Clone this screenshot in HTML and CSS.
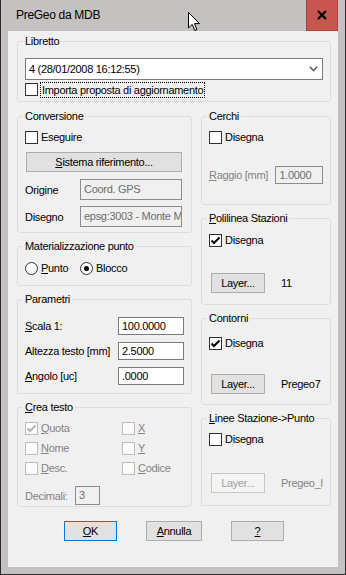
FILE: index.html
```html
<!DOCTYPE html>
<html lang="it">
<head>
    <meta charset="UTF-8">
    <title>PreGeo da MDB</title>
    <link rel="stylesheet" href="styles.css">
</head>
<body>
<div class="window">
    <div class="titlebar">
        <span class="title">PreGeo da MDB</span>
        <span class="close">
            <svg width="12" height="12" viewBox="0 0 12 12"><path d="M2 2 L10 10 M10 2 L2 10" stroke="#000" stroke-width="2.2" fill="none"/></svg>
        </span>
    </div>

    <div class="client">
        <fieldset class="group libretto">
            <legend>Libretto</legend>
            <div class="combo">
                <span>4 (28/01/2008 16:12:55)</span>
                <svg class="chevron" width="9" height="6" viewBox="0 0 9 6"><path d="M0.8 0.8 L4.5 4.6 L8.2 0.8" stroke="#606060" stroke-width="1.6" fill="none"/></svg>
            </div>
            <div class="check focus-row">
                <span class="box"></span>
                <span class="focus">Importa proposta di aggiornamento</span>
            </div>
        </fieldset>

        <div class="columns">
            <div class="col left">
                <fieldset class="group conversione">
                    <legend>Conversione</legend>
                    <div class="check"><span class="box"></span><span class="lbl">Eseguire</span></div>
                    <div class="btn wide"><u>S</u>istema riferimento...</div>
                    <div class="field-row">
                        <span class="field-label">Origine</span>
                        <span class="textbox disabled tall">Coord. GPS</span>
                    </div>
                    <div class="field-row second">
                        <span class="field-label">Disegno</span>
                        <span class="textbox disabled tall">epsg:3003 - Monte Mario / Italy zone 1</span>
                    </div>
                </fieldset>

                <fieldset class="group materializzazione">
                    <legend>Materializzazione punto</legend>
                    <div class="radios">
                        <div class="radio-item"><span class="radio"></span><span class="lbl"><u>P</u>unto</span></div>
                        <div class="radio-item"><span class="radio on"></span><span class="lbl">Blocco</span></div>
                    </div>
                </fieldset>

                <fieldset class="group parametri">
                    <legend>Parametri</legend>
                    <div class="param-grid">
                        <span><u>S</u>cala 1:</span>
                        <span class="textbox">100.0000</span>
                        <span>Altezza testo [mm]</span>
                        <span class="textbox">2.5000</span>
                        <span><u>A</u>ngolo [uc]</span>
                        <span class="textbox">.0000</span>
                    </div>
                </fieldset>

                <fieldset class="group crea">
                    <legend><u>C</u>rea testo</legend>
                    <div class="crea-grid">
                        <div class="check off"><span class="box"><svg width="11" height="11" viewBox="0 0 11 11"><path d="M1.5 5.5 L4 8 L9.5 2.5" stroke="#b4b4b4" stroke-width="2" fill="none"/></svg></span><span class="lbl"><u>Q</u>uota</span></div>
                        <div class="check off"><span class="box"></span><span class="lbl"><u>X</u></span></div>
                        <div class="check off"><span class="box"></span><span class="lbl"><u>N</u>ome</span></div>
                        <div class="check off"><span class="box"></span><span class="lbl"><u>Y</u></span></div>
                        <div class="check off"><span class="box"></span><span class="lbl"><u>D</u>esc.</span></div>
                        <div class="check off"><span class="box"></span><span class="lbl"><u>C</u>odice</span></div>
                    </div>
                    <div class="decimali">
                        <span class="muted">Decimali:</span>
                        <span class="textbox disabled small">3</span>
                    </div>
                </fieldset>
            </div>

            <div class="col right">
                <fieldset class="group cerchi">
                    <legend>Cerchi</legend>
                    <div class="check"><span class="box"></span><span class="lbl">Disegna</span></div>
                    <div class="raggio">
                        <span class="muted"><u>R</u>aggio [mm]</span>
                        <span class="textbox disabled">1.0000</span>
                    </div>
                </fieldset>

                <fieldset class="group polilinea">
                    <legend><u>P</u>olilinea Stazioni</legend>
                    <div class="check"><span class="box"><svg width="11" height="11" viewBox="0 0 11 11"><path d="M1.5 5.5 L4 8 L9.5 2.5" stroke="#000" stroke-width="2" fill="none"/></svg></span><span class="lbl">Disegna</span></div>
                    <div class="layer-row">
                        <div class="btn layer">Layer...</div>
                        <span class="layer-name">11</span>
                    </div>
                </fieldset>

                <fieldset class="group contorni">
                    <legend>Contorni</legend>
                    <div class="check"><span class="box"><svg width="11" height="11" viewBox="0 0 11 11"><path d="M1.5 5.5 L4 8 L9.5 2.5" stroke="#000" stroke-width="2" fill="none"/></svg></span><span class="lbl">Disegna</span></div>
                    <div class="layer-row">
                        <div class="btn layer">Layer...</div>
                        <span class="layer-name">Pregeo7</span>
                    </div>
                </fieldset>

                <fieldset class="group linee">
                    <legend><u>L</u>inee Stazione-&gt;Punto</legend>
                    <div class="check"><span class="box"></span><span class="lbl">Disegna</span></div>
                    <div class="layer-row">
                        <div class="btn layer disabled">Layer...</div>
                        <span class="layer-name muted">Pregeo_l</span>
                    </div>
                </fieldset>
            </div>
        </div>

        <div class="buttons">
            <div class="btn ok"><u>O</u>K</div>
            <div class="btn annulla"><u>A</u>nnulla</div>
            <div class="btn help"><u>?</u></div>
        </div>
    </div>

    <svg class="cursor" width="13" height="20" viewBox="0 0 13 20">
        <path d="M0.5 0.5 L0.5 16 L4.2 12.4 L6.8 18.5 L9 17.6 L6.5 11.6 L11.5 11.6 Z" fill="#fff" stroke="#000" stroke-width="1"/>
    </svg>
</div>
</body>
</html>
```

FILE: styles.css
```css
* {
    box-sizing: border-box;
}
body {
    margin: 0;
    font-family: "Liberation Sans", Arial, sans-serif;
    font-size: 11px;
    letter-spacing: -0.3px;
    color: #000;
    background: #fff;
}
.window {
    position: relative;
    width: 346px;
    height: 575px;
    background: #c6c1c1;
    border: 1px solid #2b2b2b;
    border-top: none;
}
.titlebar {
    display: flex;
    align-items: flex-start;
    justify-content: space-between;
    height: 31px;
}
.title {
    padding: 8px 0 0 15px;
    font-size: 12px;
    line-height: 15px;
}
.close {
    display: flex;
    align-items: center;
    justify-content: center;
    width: 32px;
    height: 31px;
    margin-right: 7px;
    background: #c75650;
    border: 1px solid #a9423c;
    border-top: none;
}
.client {
    height: 536px;
    margin: 0 7px 7px 7px;
    padding: 4px 7px 0 9px;
    background: #f0f0f0;
}

/* group boxes */
.group {
    margin: 0;
    min-width: 0;
    padding: 0 7px;
    border: 1px solid #d9dee2;
    border-radius: 3px;
}
.group legend {
    padding: 0 2px;
    margin-left: -2px;
    line-height: 13px;
}
.libretto {
    padding-top: 10px;
    padding-bottom: 3px;
}
.combo {
    display: flex;
    align-items: center;
    justify-content: space-between;
    height: 22px;
    padding: 0 3px 0 3px;
    background: #fff;
    border: 1px solid #7a7a7a;
}
.chevron {
    margin-right: 1px;
}

/* checkboxes and radios */
.check {
    display: flex;
    align-items: flex-start;
    height: 15px;
    line-height: 15px;
}
.box {
    display: flex;
    align-items: center;
    justify-content: center;
    flex: none;
    width: 13px;
    height: 13px;
    margin-top: 1px;
    background: #fff;
    border: 1px solid #333;
}
.check .lbl {
    margin-left: 3px;
}
.check.off .box {
    border-color: #bcbcbc;
    background: #fcfcfc;
}
.check.off .lbl {
    color: #838383;
}
.focus-row {
    height: 16px;
    margin-top: 2px;
}
.focus {
    height: 16px;
    margin-left: 2px;
    padding: 0 1px;
    line-height: 14px;
    border: 1px dotted #000;
}
.radios {
    display: grid;
    grid-template-columns: 55px auto;
    height: 15px;
}
.radio-item {
    display: flex;
    align-items: flex-start;
    line-height: 15px;
}
.radio {
    position: relative;
    flex: none;
    width: 13px;
    height: 13px;
    margin-top: 1px;
    background: #fff;
    border: 1px solid #333;
    border-radius: 50%;
}
.radio.on::after {
    content: "";
    position: absolute;
    left: 3px;
    top: 3px;
    width: 5px;
    height: 5px;
    border-radius: 50%;
    background: #000;
}
.radio-item .lbl {
    margin-left: 3px;
}

/* text boxes */
.textbox {
    display: block;
    height: 18px;
    padding: 0 3px;
    line-height: 16px;
    background: #fff;
    border: 1px solid #7a7a7a;
    white-space: nowrap;
    overflow: hidden;
}
.textbox.disabled {
    background: #f0f0f0;
    border-color: #8c8c8c;
    color: #6d6d6d;
}
.textbox.tall {
    height: 21px;
    line-height: 19px;
}
.textbox.small {
    width: 25px;
    height: 19px;
    line-height: 17px;
}
.muted {
    color: #838383;
}

/* buttons */
.btn {
    display: flex;
    align-items: center;
    justify-content: center;
    height: 20px;
    background: #e1e1e1;
    border: 1px solid #adadad;
}
.btn.disabled {
    background: #f4f4f4;
    border-color: #c6c6c6;
    color: #a0a0a0;
}

/* layout */
.columns {
    display: flex;
    gap: 9px;
    margin-top: 8px;
}
.col {
    display: flex;
    flex-direction: column;
    gap: 7px;
}
.col.left {
    width: 175px;
}
.col.right {
    width: 130px;
}

.conversione {
    padding-top: 7px;
    padding-bottom: 5px;
}
.btn.wide {
    width: 156px;
    margin: 7px 0 0 1px;
}
.field-row {
    display: flex;
    align-items: center;
    margin-top: 7px;
}
.field-row.second {
    margin-top: 6px;
}
.field-label {
    width: 55px;
}
.field-row .textbox {
    width: 102px;
}

.materializzazione {
    padding-top: 8px;
    padding-bottom: 9px;
}

.parametri {
    padding-top: 11px;
    padding-bottom: 8px;
}
.param-grid {
    display: grid;
    grid-template-columns: 93px 66px;
    grid-auto-rows: 18px;
    row-gap: 7px;
    align-items: center;
}

.crea {
    padding-top: 6px;
    padding-bottom: 1px;
}
.crea-grid {
    display: grid;
    grid-template-columns: 97px auto;
    grid-auto-rows: 20px;
}
.crea-grid .check {
    height: 20px;
}
.crea-grid .box {
    margin-top: 2px;
}
.crea-grid .lbl {
    line-height: 17px;
}
.decimali {
    display: flex;
    align-items: center;
    margin-top: 6px;
}
.decimali .muted {
    width: 50px;
}

.cerchi {
    padding-top: 7px;
    padding-bottom: 20px;
}
.raggio {
    display: flex;
    align-items: center;
    margin-top: 21px;
}
.raggio .muted {
    width: 67px;
}
.raggio .textbox {
    width: 48px;
}

.polilinea {
    padding-top: 8px;
    padding-bottom: 11px;
}
.polilinea .layer-row {
    margin-top: 25px;
}
.contorni {
    padding-top: 11px;
    padding-bottom: 10px;
}
.contorni .layer-row {
    margin-top: 23px;
}
.linee {
    padding-top: 7px;
    padding-bottom: 12px;
}
.linee .layer-row {
    margin-top: 26px;
}
.layer-row {
    display: flex;
    align-items: center;
}
.btn.layer {
    width: 54px;
    margin-left: 2px;
}
.layer-name {
    margin-left: 16px;
}

.buttons {
    display: flex;
    gap: 29px;
    margin-top: 14px;
    padding-left: 47px;
}
.btn.ok {
    width: 53px;
    border-color: #0078d7;
}
.btn.annulla {
    width: 56px;
}
.btn.help {
    width: 53px;
}

.cursor {
    position: absolute;
    left: 187px;
    top: 12px;
}
```
